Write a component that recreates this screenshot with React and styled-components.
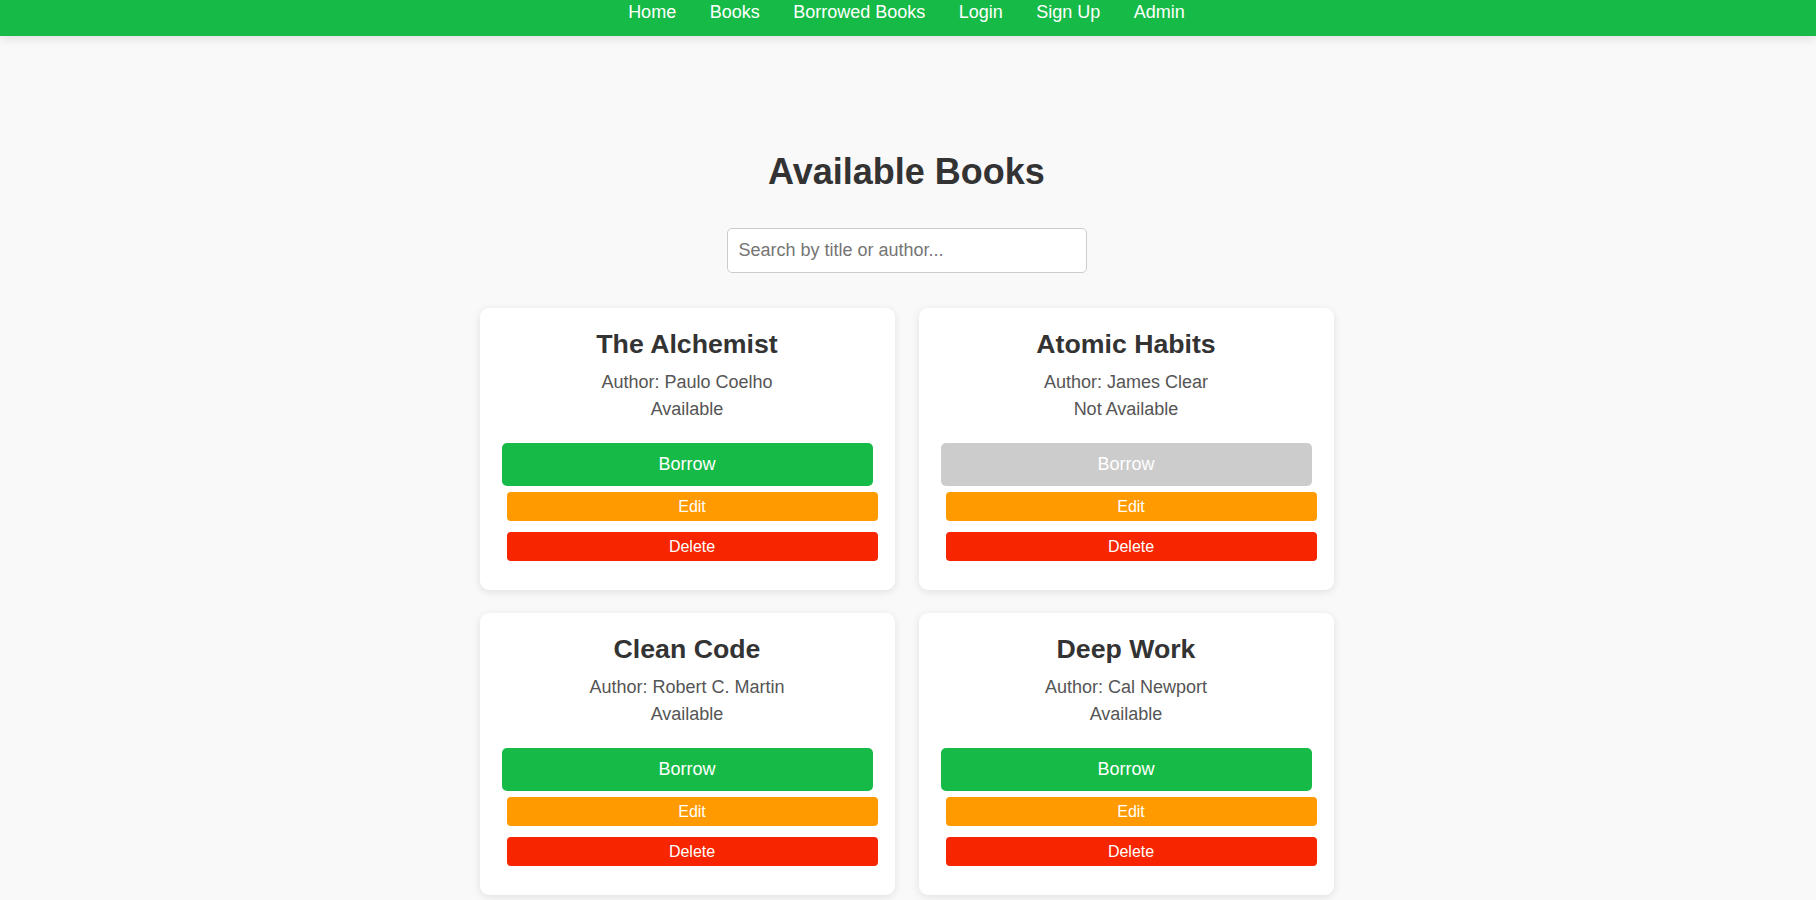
import { useState } from "react";
import styled, { createGlobalStyle } from "styled-components";

const books = [
  { id: 1, title: "The Alchemist", author: "Paulo Coelho", available: true },
  { id: 2, title: "Atomic Habits", author: "James Clear", available: false },
  { id: 3, title: "Clean Code", author: "Robert C. Martin", available: true },
  { id: 4, title: "Deep Work", author: "Cal Newport", available: true },
];

const links = ["Home", "Books", "Borrowed Books", "Login", "Sign Up", "Admin"];

export default function App() {
  const [searchTerm, setSearchTerm] = useState("");

  const filtered = books.filter(
    (book) =>
      book.title.toLowerCase().includes(searchTerm.toLowerCase()) ||
      book.author.toLowerCase().includes(searchTerm.toLowerCase())
  );

  return (
    <>
      <GlobalStyle />
      <StyledNav>
        {links.map((link) => (
          <StyledNavLink key={link} href="#">
            {link}
          </StyledNavLink>
        ))}
      </StyledNav>
      <StyledMain>
        <StyledHeading>Available Books</StyledHeading>
        <StyledSearchInput
          type="text"
          placeholder="Search by title or author..."
          value={searchTerm}
          onChange={(event) => setSearchTerm(event.target.value)}
        />
        <StyledGrid>
          {filtered.map((book) => (
            <StyledCard key={book.id}>
              <StyledTitle>{book.title}</StyledTitle>
              <StyledAuthor>Author: {book.author}</StyledAuthor>
              <StyledStatus>
                {book.available ? "Available" : "Not Available"}
              </StyledStatus>
              <StyledBorrowButton disabled={!book.available}>
                Borrow
              </StyledBorrowButton>
              <StyledSmallButton $color="#ff9a00" $gap="6px">
                Edit
              </StyledSmallButton>
              <StyledSmallButton $color="#f72500" $gap="11px">
                Delete
              </StyledSmallButton>
            </StyledCard>
          ))}
        </StyledGrid>
      </StyledMain>
    </>
  );
}

const GlobalStyle = createGlobalStyle`
  body {
    margin: 0;
    padding-right: 3px;
    background-color: #f9f9f9;
    font-family: "Liberation Sans", Arial, sans-serif;
  }
`;

const StyledNav = styled.nav`
  display: flex;
  justify-content: center;
  gap: 33.5px;
  height: 36px;
  box-sizing: border-box;
  padding-top: 2px;
  margin-right: -3px;
  padding-right: 3px;
  background-color: #16bb47;
  box-shadow: 0 2px 10px rgba(0, 0, 0, 0.12);
`;

const StyledNavLink = styled.a`
  color: #fff;
  text-decoration: none;
  font-size: 18px;
  line-height: 21px;
`;

const StyledMain = styled.main`
  display: flex;
  flex-direction: column;
  align-items: center;
  padding: 115px 0 40px;
`;

const StyledHeading = styled.h1`
  margin: 0;
  font-size: 36px;
  line-height: 41px;
  font-weight: 700;
  color: #333;
`;

const StyledSearchInput = styled.input`
  margin-top: 36px;
  width: 360px;
  height: 45px;
  box-sizing: border-box;
  padding: 0 11px;
  border: 1px solid #ccc;
  border-radius: 5px;
  background-color: #fff;
  font-family: inherit;
  font-size: 18px;
  color: #333;
  outline: none;

  &::placeholder {
    color: #757575;
  }
`;

const StyledGrid = styled.div`
  display: grid;
  grid-template-columns: repeat(2, 415px);
  column-gap: 24px;
  row-gap: 23px;
  margin-top: 35px;
`;

const StyledCard = styled.div`
  display: flex;
  flex-direction: column;
  align-items: stretch;
  padding: 21px 22px 29px;
  background-color: #fff;
  border-radius: 9px;
  box-shadow: 0 2px 8px rgba(0, 0, 0, 0.1);
  text-align: center;
`;

const StyledTitle = styled.h2`
  margin: 0;
  font-size: 26.7px;
  line-height: 31px;
  font-weight: 700;
  color: #333;
`;

const StyledAuthor = styled.p`
  margin: 12px 0 0;
  font-size: 18px;
  line-height: 21px;
  color: #555;
`;

const StyledStatus = styled(StyledAuthor)`
  margin-top: 6px;
`;

const StyledBorrowButton = styled.button`
  margin-top: 23px;
  height: 43px;
  border: none;
  border-radius: 5px;
  background-color: ${({ disabled }) => (disabled ? "#ccc" : "#16bb47")};
  color: #fff;
  font-family: inherit;
  font-size: 18px;
  cursor: ${({ disabled }) => (disabled ? "not-allowed" : "pointer")};
`;

const StyledSmallButton = styled.button`
  margin: ${({ $gap }) => $gap} -5px 0 5px;
  height: 29px;
  border: none;
  border-radius: 4px;
  background-color: ${({ $color }) => $color};
  color: #fff;
  font-family: inherit;
  font-size: 16px;
  cursor: pointer;
`;
